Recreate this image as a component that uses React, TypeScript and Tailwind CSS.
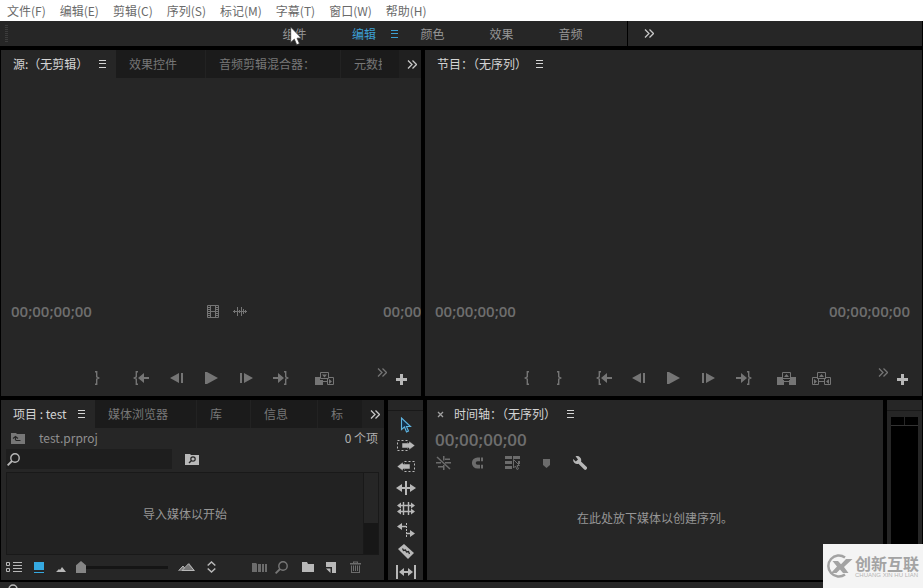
import type { ReactNode } from "react";

type IconProps = { w: number; h: number; children: ReactNode; className?: string };

function Icon({ w, h, children, className = "" }: IconProps) {
  return (
    <svg width={w} height={h} viewBox={`0 0 ${w} ${h}`} fill="currentColor" className={`shrink-0 ${className}`} aria-hidden="true">
      {children}
    </svg>
  );
}

const PanelMenuIcon = () => (
  <Icon w={7} h={8}>
    <path d="M0 0h7v1H0zM0 3h7v1H0zM0 7h7v1H0z" />
  </Icon>
);

const MoreIcon = ({ className }: { className?: string }) => (
  <Icon w={10} h={9} className={className}>
    <path d="M1 .5l4 4-4 4M5.5 .5l4 4-4 4" fill="none" stroke="currentColor" strokeWidth="1.3" />
  </Icon>
);

const MarkInIcon = () => (
  <Icon w={6} h={14}>
    <path d="M5 .8H3.300v5L1.200 7l2.100 1.200v5H5" fill="none" stroke="currentColor" strokeWidth="1.400" />
  </Icon>
);

const MarkOutIcon = () => (
  <Icon w={6} h={14}>
    <path d="M1 .8h1.700v5L4.800 7 2.700 8.200v5H1" fill="none" stroke="currentColor" strokeWidth="1.400" />
  </Icon>
);

const GoToInIcon = () => (
  <Icon w={16} h={14}>
    <path d="M5 .8H3.300v5L1.200 7l2.100 1.200v5H5" fill="none" stroke="currentColor" strokeWidth="1.400" />
    <path d="M5 7l6-5v4h5v2h-5v4z" />
  </Icon>
);

const GoToOutIcon = () => (
  <Icon w={16} h={14}>
    <path d="M11 .8h1.700v5L14.800 7l-2.100 1.200v5H11" fill="none" stroke="currentColor" strokeWidth="1.400" />
    <path d="M11 7L5 2v4H0v2h5v4z" />
  </Icon>
);

const StepBackIcon = () => (
  <Icon w={13} h={10}>
    <path d="M0 5l9-5v10zM11 0h2v10h-2z" />
  </Icon>
);

const PlayIcon = () => (
  <Icon w={13} h={12}>
    <path d="M0 0h2l11 6-11 6H0z" />
  </Icon>
);

const StepForwardIcon = () => (
  <Icon w={13} h={10}>
    <path d="M0 0h2v10H0zM4 0l9 5-9 5z" />
  </Icon>
);

const InsertIcon = () => (
  <Icon w={19} h={13}>
    <path d="M0 5h5v3h3v5H0z" />
    <path d="M5.500 .5h8v6h-8zM8 9.500h4M12.500 6.500v6h6v-7h-5" fill="none" stroke="currentColor" />
    <path d="M7 2.500h5L9.500 5.500zM14 7l3 2.500-3 2.500z" />
  </Icon>
);

const LiftIcon = () => (
  <Icon w={19} h={13}>
    <path d="M0 5h5v3h2v5H0zM14 5h5v8h-7V8h2zM7 5l2.500-3L12 5z" />
    <path d="M5.500 8V.5h8V8M6 6.500h7M7 9.500h5" fill="none" stroke="currentColor" />
  </Icon>
);

const ExtractIcon = () => (
  <Icon w={19} h={13}>
    <path d="M5.500 6V.5h8V6M5 6.500h9M7 9.500h5M5 5.500H.5v7h6v-6M14 5.500h4.500v7h-6v-6" fill="none" stroke="currentColor" />
    <path d="M2 7l3 2.500L2 12zM17 7l-3 2.500 3 2.500zM7 5l2.500-3L12 5z" />
  </Icon>
);

const PlusIcon = () => (
  <Icon w={11} h={11}>
    <path d="M4 0h3v4h4v3H7v4H4V7H0V4h4z" />
  </Icon>
);

const FilmIcon = () => (
  <Icon w={12} h={13}>
    <path d="M.5 .5h11v12H.5zM3.500 .5v12M8.500 .5v12M3.500 6.500h5M1 2.500h2M1 4.500h2M1 6.500h2M1 8.500h2M1 10.500h2M9 2.500h2M9 4.500h2M9 6.500h2M9 8.500h2M9 10.500h2" fill="none" stroke="currentColor" />
  </Icon>
);

const WaveIcon = () => (
  <Icon w={14} h={11}>
    <path d="M0 5.500h14M1.500 4v3M4.500 1v9M6.500 4v3M8.500 1v9M10.500 3v5M12.500 4v3" fill="none" stroke="currentColor" />
  </Icon>
);

const SearchIcon = () => (
  <Icon w={13} h={13}>
    <circle cx="8" cy="5" r="4.200" fill="none" stroke="currentColor" strokeWidth="1.400" />
    <path d="M5 8L.6 12.400" stroke="currentColor" strokeWidth="1.800" />
  </Icon>
);

const tools: { name: string; icon: ReactNode; active?: boolean }[] = [
  {
    name: "选择工具",
    active: true,
    icon: (
      <Icon w={12} h={16}>
        <path d="M1.500 1v11.500l3-2.500 2 5 2-1-2-4.500h4z" fill="#14304a" stroke="currentColor" strokeWidth="1.100" />
      </Icon>
    ),
  },
  {
    name: "向前选择轨道工具",
    icon: (
      <Icon w={18} h={12}>
        <path d="M.5 .5h10v10H.5z" fill="none" stroke="currentColor" strokeDasharray="2 2" />
        <path d="M5 3h7V1l6 4.500-6 4.500V8H5z" stroke="#262626" strokeWidth=".5" />
      </Icon>
    ),
  },
  {
    name: "向后选择轨道工具",
    icon: (
      <Icon w={18} h={12}>
        <path d="M7.500 .5h10v10h-10z" fill="none" stroke="currentColor" strokeDasharray="2 2" />
        <path d="M13 3H6V1L0 5.500 6 10V8h7z" stroke="#262626" strokeWidth=".5" />
      </Icon>
    ),
  },
  {
    name: "波纹编辑工具",
    icon: (
      <Icon w={20} h={14}>
        <path d="M9 0h2v14H9zM0 7l6-4v3h8V3l6 4-6 4V8H6v3z" />
      </Icon>
    ),
  },
  {
    name: "滚动编辑工具",
    icon: (
      <Icon w={18} h={13}>
        <path d="M6.500 0v13M11.500 0v13M2 3.500h14M2 9.500h14" stroke="currentColor" strokeWidth="1.400" />
        <path d="M0 3.500L4 .5v6zM18 3.500L14 .5v6zM0 9.500l4-3v6zM18 9.500l-4-3v6z" />
      </Icon>
    ),
  },
  {
    name: "比率拉伸工具",
    icon: (
      <Icon w={18} h={14}>
        <path d="M0 3.500L5 0v7zM18 10.500L13 7v7z" />
        <path d="M4 3.500h5M9 10.500h5" stroke="currentColor" strokeWidth="1.400" />
        <path d="M9.500 0v14" stroke="currentColor" strokeDasharray="2 1" />
      </Icon>
    ),
  },
  {
    name: "剃刀工具",
    icon: (
      <Icon w={16} h={16}>
        <path d="M0 6l6-5 10 9-6 6z" />
        <path d="M4.500 5.500l1 2 2-.5 1 2 2-.5 1 2.500" stroke="#262626" strokeWidth="1.300" fill="none" />
      </Icon>
    ),
  },
  {
    name: "外滑工具",
    icon: (
      <Icon w={20} h={14}>
        <path d="M0 0h2v14H0zM18 0h2v14h-2zM3 7l5-4v3h4V3l5 4-5 4V8H8v3z" />
      </Icon>
    ),
  },
];

const menus = ["文件(F)", "编辑(E)", "剪辑(C)", "序列(S)", "标记(M)", "字幕(T)", "窗口(W)", "帮助(H)"];
const workspaces = ["组件", "编辑", "颜色", "效果", "音频"];

function IconButton({ label, className = "", children }: { label: string; className?: string; children: ReactNode }) {
  return (
    <button aria-label={label} className={`flex shrink-0 items-center justify-center hover:text-white ${className}`}>
      {children}
    </button>
  );
}

function ActiveTab({ title, className = "" }: { title: string; className?: string }) {
  return (
    <div className={`flex shrink-0 items-center text-[#d4d4d4] ${className}`}>
      <button className="whitespace-nowrap">{title}</button>
      <IconButton label="面板菜单" className="ml-auto">
        <PanelMenuIcon />
      </IconButton>
    </div>
  );
}

function Tab({ title, className = "" }: { title: string; className?: string }) {
  return (
    <button className={`shrink-0 border-r border-[#222] bg-[#1b1b1b] pl-[13px] text-left whitespace-nowrap text-[#777] ${className}`}>
      {title}
    </button>
  );
}

// Last tab of a strip, cut off by the overflow button
function ClippedTab({ title, className }: { title: string; className: string }) {
  return (
    <div className="flex min-w-0 flex-1 bg-[#1b1b1b] pl-[13px]">
      <button className={`overflow-hidden text-left whitespace-nowrap text-[#777] ${className}`}>{title}</button>
    </div>
  );
}

function Timecode({ className = "text-[15px]" }: { className?: string }) {
  return <span className={`font-['Open_Sans',sans-serif] leading-5 font-semibold text-[#6e6e6e] ${className}`}>00;00;00;00</span>;
}

function Transport({ left, right }: { left: ReactNode; right: ReactNode }) {
  return (
    <div className="grid h-9 grid-cols-[1fr_auto_1fr] text-[#757575]">
      <div className="mr-[11px] flex justify-end">{left}</div>
      <div className="flex">
        <IconButton label="转到入点" className="w-[35px]"><GoToInIcon /></IconButton>
        <IconButton label="后退一帧" className="w-[35px]"><StepBackIcon /></IconButton>
        <IconButton label="播放" className="w-[35px]"><PlayIcon /></IconButton>
        <IconButton label="前进一帧" className="w-[35px]"><StepForwardIcon /></IconButton>
        <IconButton label="转到出点" className="w-[35px]"><GoToOutIcon /></IconButton>
      </div>
      <div className="flex pr-3.5 pl-2">
        {right}
        <IconButton label="更多" className="ml-auto pb-3"><MoreIcon /></IconButton>
        <IconButton label="按钮编辑器" className="ml-[9px] pt-0.5 text-[#b8b8b8]"><PlusIcon /></IconButton>
      </div>
    </div>
  );
}

function SourcePanel() {
  return (
    <section className="flex min-w-0 flex-col overflow-hidden bg-[#262626]">
      <div className="flex h-7">
        <ActiveTab title="源:（无剪辑）" className="w-[115px] pr-2.5 pl-3" />
        <Tab title="效果控件" className="w-[90px]" />
        <Tab title="音频剪辑混合器：" className="w-[135px]" />
        <ClippedTab title="元数据" className="w-7" />
        <IconButton label="更多" className="bg-[#202020] pr-1 pl-2 text-[#c8c8c8]"><MoreIcon /></IconButton>
      </div>
      <div className="mt-auto mb-[39px] flex items-center pl-2.5 text-[#757575]">
        <Timecode />
        <IconButton label="仅拖动视频" className="ml-auto"><FilmIcon /></IconButton>
        <IconButton label="仅拖动音频" className="mr-[136px] ml-3.5"><WaveIcon /></IconButton>
        <div className="flex w-[38px] overflow-hidden"><Timecode /></div>
      </div>
      <Transport
        left={<IconButton label="标记出点" className="w-8"><MarkOutIcon /></IconButton>}
        right={<IconButton label="插入" className="w-[35px]"><InsertIcon /></IconButton>}
      />
    </section>
  );
}

function ProgramPanel() {
  return (
    <section className="flex min-w-0 flex-col overflow-hidden bg-[#262626]">
      <div className="flex h-7">
        <ActiveTab title="节目：（无序列）" className="w-[118px] pl-3" />
      </div>
      <div className="mt-auto mb-[39px] flex items-center justify-between pr-3 pl-2.5">
        <Timecode />
        <Timecode />
      </div>
      <Transport
        left={
          <>
            <IconButton label="标记入点" className="w-8"><MarkInIcon /></IconButton>
            <IconButton label="标记出点" className="w-8"><MarkOutIcon /></IconButton>
          </>
        }
        right={
          <>
            <IconButton label="提升" className="w-[35px]"><LiftIcon /></IconButton>
            <IconButton label="提取" className="w-[35px]"><ExtractIcon /></IconButton>
          </>
        }
      />
    </section>
  );
}

function ProjectPanel() {
  return (
    <section className="flex min-w-0 flex-col overflow-hidden bg-[#262626]">
      <div className="flex h-7">
        <ActiveTab title="项目 : test" className="w-[94px] pr-2.5 pl-3" />
        <Tab title="媒体浏览器" className="w-[102px]" />
        <Tab title="库" className="w-[54px]" />
        <Tab title="信息" className="w-[67px]" />
        <ClippedTab title="标记" className="w-3" />
        <IconButton label="更多" className="bg-[#202020] pr-1 pl-2 text-[#c8c8c8]"><MoreIcon /></IconButton>
      </div>

      <div className="flex h-5 items-center pr-1.5 pl-2.5 text-[#8f8f8f]">
        <IconButton label="上一级" className="text-[#777]">
          <Icon w={14} h={12}>
            <path d="M0 1h5l1 1h8v10H0z" />
            <path d="M4.500 8V4.500M2 6.500l2.500-2 2.500 2M4.500 8.500h5" fill="none" stroke="#262626" strokeWidth="1.200" />
          </Icon>
        </IconButton>
        <span className="ml-3.5">test.prproj</span>
        <span className="ml-auto text-[#b0b0b0]">0 个项</span>
      </div>

      <div className="mt-px flex items-center pl-[5px] text-[#b8b8b8]">
        <label className="flex h-5 w-[166px] items-center bg-[#1e1e1e] pl-px">
          <SearchIcon />
          <input type="text" aria-label="搜索" className="ml-1 min-w-0 flex-1 bg-transparent outline-none" />
        </label>
        <IconButton label="创建搜索素材箱" className="ml-[13px]">
          <Icon w={14} h={12}>
            <path d="M0 1h5l1 1h8v10H0z" />
            <circle cx="8" cy="6" r="2.200" fill="none" stroke="#262626" strokeWidth="1.200" />
            <path d="M6.500 7.500L4 10" stroke="#262626" strokeWidth="1.400" />
          </Icon>
        </IconButton>
      </div>

      <div className="mx-[5px] mt-[3px] flex h-[83px] border border-[#191919] bg-[#222]">
        <p className="flex flex-1 items-center justify-center text-[#969696]">导入媒体以开始</p>
        <div className="w-[15px] border-l border-[#191919] bg-[#171717]">
          <div className="h-[50px] bg-[#262626]" />
        </div>
      </div>

      <div className="flex h-6 items-center pr-[23px] pl-[5px] text-[#b8b8b8]">
        <IconButton label="列表视图">
          <Icon w={17} h={11}>
            <path d="M.5 .5h3v3h-3zM.5 6.500h3v3h-3z" fill="none" stroke="currentColor" />
            <path d="M7 0h9v1H7zM7 3h9v1H7zM7 6h9v1H7zM7 9h9v1H7z" />
          </Icon>
        </IconButton>
        <IconButton label="图标视图" className="ml-[11px] text-[#35a9e1]">
          <Icon w={10} h={11}>
            <path d="M0 0h10v8H0zM0 10h10v1H0z" />
          </Icon>
        </IconButton>
        <label className="ml-3 flex items-center">
          <Icon w={10} h={5} className="mt-1">
            <path d="M0 5l3-3 1 1 2-3 4 5z" />
          </Icon>
          <input
            type="range"
            aria-label="缩放"
            defaultValue={0}
            className="mx-2.5 h-3 w-[92px] appearance-none bg-[linear-gradient(#151515,#151515)] bg-[length:100%_3px] bg-center bg-no-repeat [&::-webkit-slider-thumb]:h-3 [&::-webkit-slider-thumb]:w-2.5 [&::-webkit-slider-thumb]:appearance-none [&::-webkit-slider-thumb]:bg-[#858585] [&::-webkit-slider-thumb]:[clip-path:polygon(50%_0,100%_35%,100%_100%,0_100%,0_35%)]"
          />
          <Icon w={17} h={8}>
            <path d="M0 8l5-5 2 2 4-5 6 8z" fill="#777" />
            <path d="M.8 7.500L5 3l1.500 2M4 7.500L10.500 .8l5.700 6.700z" fill="none" stroke="currentColor" />
          </Icon>
        </label>
        <IconButton label="排序图标" className="ml-3">
          <Icon w={9} h={12}>
            <path d="M.7 4.500l3.800-3.500 3.800 3.500M.7 7.500L4.500 11l3.800-3.500" fill="none" stroke="currentColor" strokeWidth="1.500" />
          </Icon>
        </IconButton>
        <IconButton label="自动匹配序列" className="ml-auto text-[#6c6c6c]">
          <Icon w={15} h={9}>
            <path d="M0 0h4l1 1v8H0zM6 1h3v8H6zM10 1h2v8h-2zM13 1h2v8h-2z" />
          </Icon>
        </IconButton>
        <IconButton label="查找" className="ml-2 text-[#777]"><SearchIcon /></IconButton>
        <IconButton label="新建素材箱" className="ml-3.5">
          <Icon w={12} h={10}>
            <path d="M0 0h5l1 2h6v8H0z" />
          </Icon>
        </IconButton>
        <IconButton label="新建项" className="ml-3">
          <Icon w={10} h={11}>
            <path d="M0 0h10v11H6V5H0zM0 6.500h4.500V11z" />
          </Icon>
        </IconButton>
        <IconButton label="清除" className="ml-3.5 text-[#6c6c6c]">
          <Icon w={11} h={12}>
            <path d="M0 2h3V.5h5V2h3v1.500H0zM4 1.500V2h3v-.5zM1 4.500h1V11h7V4.500h1V12H1zM3 4.500h1V10H3zM5 4.500h1V10H5zM7 4.500h1V10H7z" />
          </Icon>
        </IconButton>
      </div>
    </section>
  );
}

function TimelinePanel() {
  return (
    <section className="flex min-w-0 flex-col overflow-hidden bg-[#262626]">
      <div className="flex h-7 pl-2.5">
        <IconButton label="关闭" className="text-[#a0a0a0]">
          <Icon w={7} h={7}>
            <path d="M1 1l5 5M6 1L1 6" stroke="currentColor" strokeWidth="1.300" />
          </Icon>
        </IconButton>
        <ActiveTab title="时间轴：（无序列）" className="ml-2.5 w-[120px]" />
      </div>
      <div className="mt-0.5 flex pl-2">
        <Timecode className="text-[17px]" />
      </div>
      <div className="mt-[3px] flex h-5 items-center pl-[9px] text-[#6c6c6c]">
        <IconButton label="将序列作为嵌套">
          <Icon w={15} h={14}>
            <path d="M1 1l13 12" fill="none" stroke="currentColor" strokeWidth="1.500" />
            <path d="M0 6h5v1.500H0zM9 6h6v1.500H9zM2 10h6v1.500H2zM9 2.500h5V4H9zM7 0h1.500v4.500H7zM7 9h1.500v5H7z" />
          </Icon>
        </IconButton>
        <IconButton label="对齐" className="ml-5">
          <Icon w={13} h={12}>
            <path d="M12 2.300H6.500a3.700 3.700 0 000 7.400H12" fill="none" stroke="currentColor" strokeWidth="3.800" />
            <path d="M9.500 0v12" stroke="#262626" />
          </Icon>
        </IconButton>
        <IconButton label="链接选择项" className="ml-[21px]">
          <Icon w={15} h={14}>
            <path d="M0 0h7v3H0zM8 0h7v3H8zM0 5h7v3H0zM0 10h7v3H0zM13 5h2v3h-2z" />
            <path d="M8.500 3.500v8.500l2-2 1.500 3.500 1.500-.7-1.500-3.300h2.500z" fill="#262626" stroke="currentColor" />
          </Icon>
        </IconButton>
        <IconButton label="添加标记" className="ml-[22px]">
          <Icon w={9} h={9}>
            <path d="M1 0h7v6L4.500 9 1 6z" />
          </Icon>
        </IconButton>
        <IconButton label="时间轴显示设置" className="ml-[22px] text-[#b8b8b8]">
          <Icon w={14} h={14}>
            <path d="M2.500 .3A4.200 4.200 0 018 5.500l5.500 5.300a1.700 1.700 0 01-2.500 2.500L5.500 7.800A4.200 4.200 0 01.2 3l2.600 2.400L5 3.400z" />
          </Icon>
        </IconButton>
      </div>
      <p className="flex h-[90px] items-center justify-center text-[#969696]">在此处放下媒体以创建序列。</p>
    </section>
  );
}

function Watermark() {
  return (
    <div className="absolute right-0 bottom-0 flex h-11 w-[100px] items-center bg-[#f4f4f4] pl-[3px] text-[#a3a3a3]">
      <Icon w={27} h={26}>
        <path d="M19 4.500A10.500 10.500 0 1019 21.500" fill="none" stroke="currentColor" strokeWidth="2.500" />
        <path d="M6.500 8H12l3 3.200L20 6h6.500l-8.500 8 4.500 6H17l-3-3.500L10.500 20H5l6-6.500z" />
      </Icon>
      <div className="ml-0.5">
        <div className="text-base leading-[18px] font-bold whitespace-nowrap">创新互联</div>
        <div className="font-['Liberation_Sans',sans-serif] text-[6px] leading-[7px] whitespace-nowrap text-[#b4b4b4]">CHUANG XIN HU LIAN</div>
      </div>
    </div>
  );
}

export default function App() {
  return (
    <div className="relative flex min-h-screen flex-col overflow-hidden bg-black font-['Noto_Sans_CJK_SC',sans-serif] text-xs leading-4 text-[#969696]">
      <nav className="flex h-[21px] items-center gap-3.5 bg-white pl-[7px] text-[#6a6a6a]">
        {menus.map((m) => (
          <button key={m} className="whitespace-nowrap">{m}</button>
        ))}
      </nav>

      <div className="mr-px grid h-[25px] grid-cols-[628fr_294fr] bg-[#262626]">
        <div className="flex items-center border-r border-black pr-[22px] pl-[5px]">
          <Icon w={3} h={18} className="text-[#3c3c3c]">
            <path d="M1.500 0v18" stroke="currentColor" strokeWidth="3" strokeDasharray="1 1" />
          </Icon>
          <div className="ml-auto flex h-full">
            {workspaces.map((w) =>
              w === "编辑" ? (
                <button key={w} className="flex w-[69px] items-center justify-end gap-[15px] text-[#3d9fd3]">
                  {w}
                  <PanelMenuIcon />
                </button>
              ) : (
                <button key={w} className="w-[69px]">{w}</button>
              )
            )}
          </div>
        </div>
        <IconButton label="更多工作区" className="justify-self-start pl-4 text-[#c8c8c8]"><MoreIcon /></IconButton>
      </div>

      <div className="mx-px mt-1 grid flex-1 grid-cols-[420fr_497fr] gap-1">
        <SourcePanel />
        <ProgramPanel />
      </div>

      <div className="mx-px mt-1 grid h-[180px] grid-cols-[383fr_35px_456fr_35px] gap-1">
        <ProjectPanel />
        <div className="flex flex-col overflow-hidden bg-[#262626] text-[#b8b8b8]">
          <div className="mb-[3px] h-[11px] shrink-0 border-b border-[#191919]" />
          {tools.map((t) => (
            <IconButton key={t.name} label={t.name} className={t.active ? "h-[21px] text-[#5fb4e0]" : "h-[21px]"}>
              {t.icon}
            </IconButton>
          ))}
        </div>
        <TimelinePanel />
        <div className="flex flex-col bg-[#262626] px-1 pb-1">
          <div className="-mx-1 h-[11px] border-b border-[#191919]" />
          <div className="mt-1.5 grid h-[9px] grid-cols-2 gap-px border-b border-[#333]">
            <div className="bg-black" />
            <div className="bg-black" />
          </div>
          <div className="flex-1 bg-black" />
        </div>
      </div>

      <div className="mt-0.5 h-1.5 overflow-hidden bg-[#262626] pl-2">
        <Icon w={10} h={10} className="mt-0.5">
          <circle cx="5" cy="5" r="4" fill="none" stroke="#b8b8b8" strokeWidth="1.500" />
        </Icon>
      </div>

      <Watermark />

      {/* Mouse pointer */}
      <Icon w={12} h={20} className="absolute top-[26px] left-[290px]">
        <path d="M.7 1v15.500l3.600-3.300 2.400 5.600 2.800-1.200-2.400-5.400h4.400z" fill="#fff" stroke="#333" strokeWidth=".8" />
      </Icon>
    </div>
  );
}
